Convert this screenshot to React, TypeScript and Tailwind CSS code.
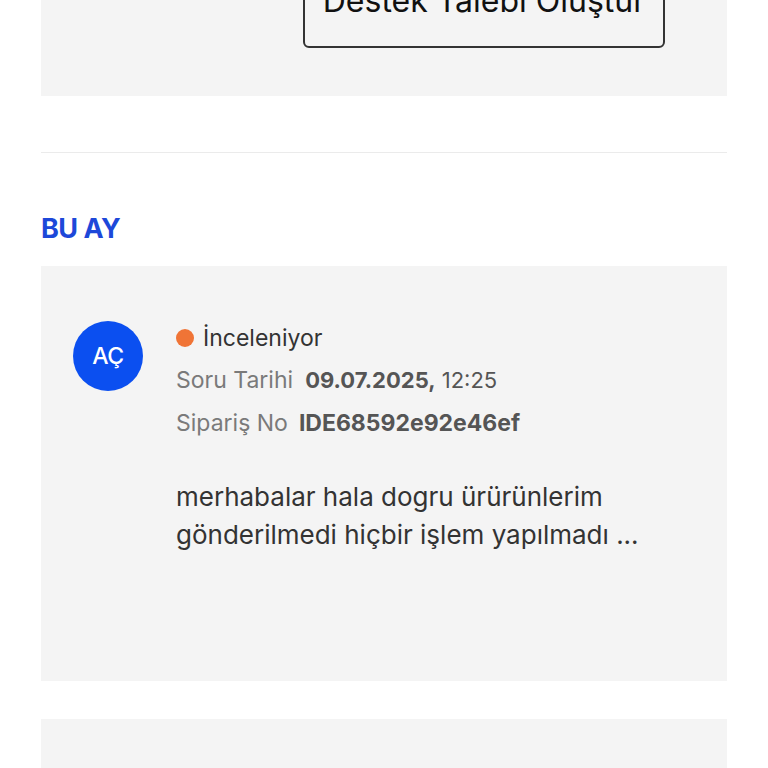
const font = { fontFamily: "Inter, 'Noto Sans', sans-serif" };

function StatusCard() {
  return (
    <div className="flex gap-[33px] bg-[#f4f4f4] px-[32px] pt-[55px] h-[415px]">
      <div className="flex size-[70px] shrink-0 items-center justify-center rounded-full bg-[#0b4ff0] text-[23px] font-medium tracking-[-0.5px] text-white">
        AÇ
      </div>
      <div className="flex flex-col pt-[2px]">
        <div className="flex h-[30px] items-center gap-[9px] text-[23px] text-[#333]">
          <span className="size-[18px] rounded-full bg-[#f07436]" />
          İnceleniyor
        </div>
        <div className="mt-[12px] flex h-[30px] items-center gap-[12px] text-[22px]">
          <span className="text-[23px] text-[#7a7a7a]">Soru Tarihi</span>
          <span className="text-[#555]">
            <b className="font-bold">09.07.2025,</b> 12:25
          </span>
        </div>
        <div className="mt-[13px] flex h-[30px] items-center gap-[11px] text-[23px]">
          <span className="text-[#7a7a7a]">Sipariş No</span>
          <b className="font-bold text-[#555]">IDE68592e92e46ef</b>
        </div>
        <p className="mt-[40px] text-[26px] leading-[38px] text-[#333]">
          merhabalar hala dogru ürürünlerim
          <br />
          gönderilmedi hiçbir işlem yapılmadı ...
        </p>
      </div>
    </div>
  );
}

export default function App() {
  return (
    <div className="h-[768px] overflow-hidden bg-white px-[41px]" style={font}>
      <div className="h-[96px] bg-[#f4f4f4]">
        <div className="flex pl-[262px]">
          <button className="mt-[-46px] flex h-[94px] w-[362px] items-center justify-center rounded-[6px] border-2 border-[#333] text-[32px] text-[#111]">
            Destek Talebi Oluştur
          </button>
        </div>
      </div>
      <div className="mt-[56px] border-t border-[#ebebeb]" />
      <h2 className="mt-[61px] text-[27px] font-bold leading-[30px] tracking-[-0.5px] text-[#1d48d9]">BU AY</h2>
      <div className="mt-[22px]">
        <StatusCard />
      </div>
      <div className="mt-[38px] h-[200px] bg-[#f4f4f4]" />
    </div>
  );
}
